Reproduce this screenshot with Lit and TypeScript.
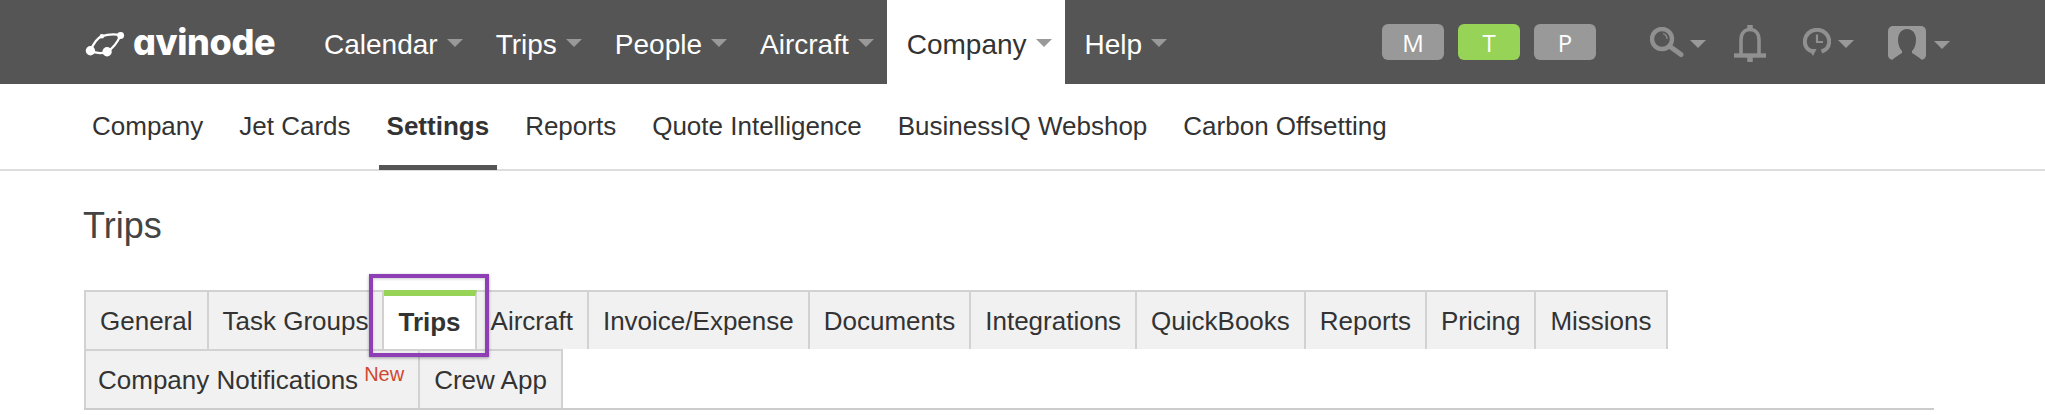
import { LitElement, html, css } from "lit";
import { customElement } from "lit/decorators.js";

@customElement("app-root")
export class AppRoot extends LitElement {
  static styles = css`
    :host { display: block; font-family: "Liberation Sans", Arial, sans-serif; color: #333; background: #fff; height: 415px; overflow: hidden; position: relative; }
    .top { height: 84px; background: #555; display: flex; align-items: stretch; padding: 0 95px 0 84px; }
    .logo { display: flex; align-items: center; width: 220px; gap: 7px; flex: none; padding-top: 4px; box-sizing: border-box; }
    .logo-text { font-family: Inter, "Liberation Sans", sans-serif; font-feature-settings: "cv11"; font-weight: 800; font-size: 36px; color: #fff; letter-spacing: -0.4px; line-height: 1; margin-top: -5px; }
    .menu { display: flex; }
    .menu a { display: flex; align-items: center; gap: 9px; padding: 6px 13px 0 20px; font-size: 28px; color: #fff; }
    .menu a .caret { margin-top: -5px; }
    .menu a.on { background: #fff; color: #333; }
    .caret { width: 0; height: 0; border-left: 8px solid transparent; border-right: 8px solid transparent; border-top: 8px solid #999; flex: none; }
    .right { margin-left: auto; display: flex; align-items: center; }
    .modes { display: flex; gap: 14px; align-items: center; }
    .mode { width: 62px; height: 36px; border-radius: 6px; background: #999; color: #fff; font-family: "Open Sans", sans-serif; font-weight: 400; font-size: 24px; display: flex; align-items: center; justify-content: center; }
    .mode.on { background: #97d357; }
    .tools { display: flex; align-items: center; margin-left: 54px; }
    .tools .caret { margin-top: 4px; }
    .tool { display: flex; align-items: center; }
    .t1 { gap: 6px; margin-right: 28px; }
    .t2 { margin-right: 37px; margin-top: 3px; }
    .t3 { gap: 7px; margin-right: 34px; }
    .t4 { gap: 8px; margin-top: 2px; }
    .sub { height: 85px; border-bottom: 2px solid #ddd; display: flex; padding-left: 84px; gap: 20px; }
    .sub a { display: flex; align-items: center; padding: 5px 8px 2px; font-size: 26px; border-bottom: 5px solid transparent; margin-bottom: -1px; }
    .sub a.on { font-weight: 700; border-bottom-color: #555; }
    h1 { font-size: 36px; font-weight: 400; margin: 0; padding: 34px 0 0 83px; line-height: 42px; color: #444; }
    .tabs { margin: 43px 111px 0 84px; border-bottom: 2px solid #ccc; display: flex; flex-wrap: wrap; }
    .tab { height: 59px; box-sizing: border-box; background: #f1f1f1; border: 2px solid #d2d2d2; border-bottom: none; border-left-width: 0; padding: 2px 14px 0; font-size: 26px; display: flex; align-items: center; color: #333; white-space: nowrap; }
    .tab.first { border-left-width: 2px; }
    .tab.active { background: #fff; font-weight: 700; border-top: 6px solid #97d357; padding: 0 14px 0 14px; }
    .tab.notif { padding: 2px 14px 0 12px; }
    .tab.crew { padding: 2px 14px 0 14px; }
    .break { flex-basis: 100%; height: 0; }
    sup { color: #d0472f; font-size: 20px; line-height: 1; margin-left: 6px; align-self: flex-start; margin-top: 11px; }
    .mark { position: absolute; left: 369px; top: 274px; width: 120px; height: 83px; box-sizing: border-box; border: 4px solid #8e3fb5; box-shadow: 0 1px 3px rgba(0,0,0,.35), inset 0 1px 3px rgba(0,0,0,.2); pointer-events: none; }
    svg { display: block; flex: none; }
  `;

  render() {
    const menu = ["Calendar", "Trips", "People", "Aircraft", "Company", "Help"];
    const sub = ["Company", "Jet Cards", "Settings", "Reports", "Quote Intelligence", "BusinessIQ Webshop", "Carbon Offsetting"];
    const row1 = ["General", "Task Groups", "Trips", "Aircraft", "Invoice/Expense", "Documents", "Integrations", "QuickBooks", "Reports", "Pricing", "Missions"];
    return html`
      <div class="top">
        <div class="logo">
          <svg width="42" height="25" viewBox="0 0 40 24" fill="none" stroke="#fff" stroke-width="2.2">
            <path d="M6 18 C9 11 12 6 17 4 C23 2 30 2 35 3" />
            <path d="M35 3 C32 10 27 16 22 19 C16 21 10 20 6 18" />
            <circle cx="6" cy="18" r="4.5" fill="#fff" stroke="none"/>
            <circle cx="22" cy="19" r="4.5" fill="#fff" stroke="none"/>
            <circle cx="35" cy="3.4" r="3.3" fill="#fff" stroke="none"/>
            <circle cx="17" cy="4" r="2.2" fill="#fff" stroke="none"/>
          </svg>
          <span class="logo-text">avinode</span>
        </div>
        <div class="menu">
          ${menu.map((m) => html`<a class=${m === "Company" ? "on" : ""}>${m}<span class="caret"></span></a>`)}
        </div>
        <div class="right">
          <div class="modes">
            <div class="mode">M</div><div class="mode on">T</div><div class="mode">P</div>
          </div>
          <div class="tools">
            <div class="tool t1">
              <svg width="34" height="31" viewBox="0 0 34 31" fill="none" stroke="#909090"><circle cx="12" cy="12" r="10" stroke-width="4.4"/><path d="M20 19.5 L31 27.5" stroke-width="5" stroke-linecap="round"/><path d="M13 6.5 Q17 8 17 12" stroke-width="1.3"/></svg>
              <span class="caret"></span>
            </div>
            <div class="tool t2">
              <svg width="32" height="37" viewBox="0 0 32 37" fill="none" stroke="#909090" stroke-width="3.6"><path d="M7 29 V15 C7 8 11 4.5 16 4.5 C21 4.5 25 8 25 15 V29"/><path d="M0 30.5 H32" stroke-width="4.4"/><path d="M16 0 V5 M16 32 V37" stroke-width="5.5"/></svg>
            </div>
            <div class="tool t3">
              <svg width="28" height="28" viewBox="0 0 28 28" fill="none" stroke="#909090" stroke-width="4"><path d="M9.5 23.5 C4.5 22 1.8 18 1.8 13.5 C1.8 7 7 1.8 14 1.8 C21 1.8 26.2 7 26.2 13.5 C26.2 18 23.5 22 18.5 23.5"/><path d="M14 6.5 V14 H20" stroke-width="2.2"/><path d="M6 21 L13.5 21 L10 28 Z" fill="#909090" stroke="none"/></svg>
              <span class="caret"></span>
            </div>
            <div class="tool t4">
              <svg width="38" height="34" viewBox="0 0 38 34"><rect width="38" height="34" rx="5" fill="#999"/><path fill="#555" d="M19 3 C13 3 10 8 10 14 C10 19 12 23 14 25 L14 27 C11 29 7 31 4 34 H34 C31 31 27 29 24 27 L24 25 C26 23 28 19 28 14 C28 8 25 3 19 3 Z"/></svg>
              <span class="caret"></span>
            </div>
          </div>
        </div>
      </div>
      <div class="sub">
        ${sub.map((s) => html`<a class=${s === "Settings" ? "on" : ""}>${s}</a>`)}
      </div>
      <h1>Trips</h1>
      <div class="tabs">
        ${row1.map((t, i) => html`<div class="tab ${i === 0 ? "first" : ""} ${t === "Trips" ? "active" : ""}">${t}</div>`)}
        <div class="break"></div>
        <div class="tab first notif">Company Notifications<sup>New</sup></div>
        <div class="tab crew">Crew App</div>
      </div>
      <div class="mark"></div>
    `;
  }
}
